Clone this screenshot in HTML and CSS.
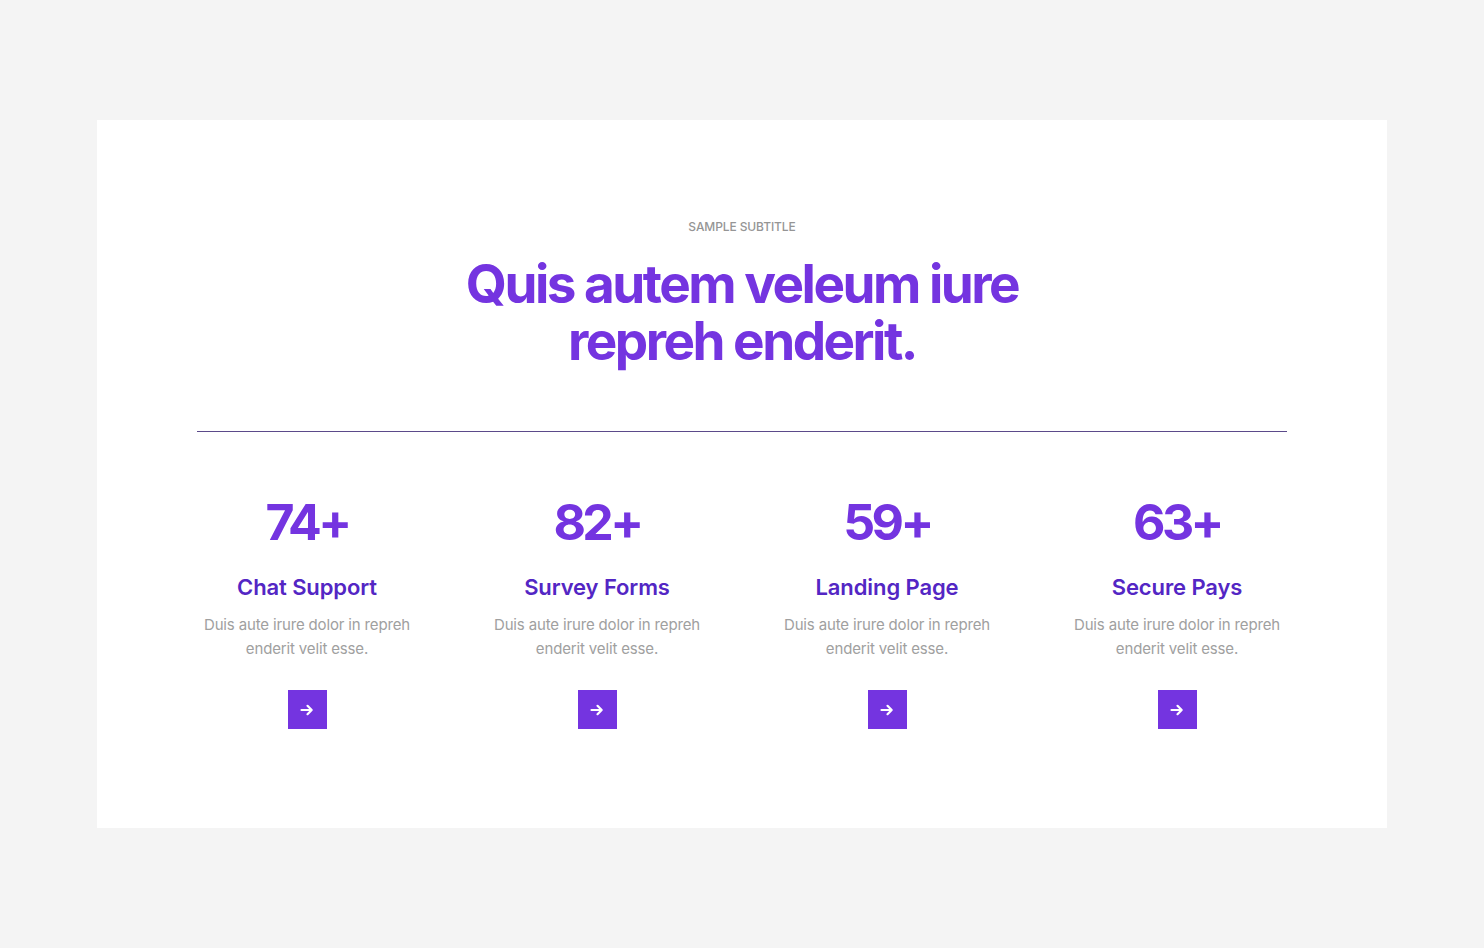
FILE: index.html
```html
<!DOCTYPE html>
<html lang="en">
<head>
<meta charset="utf-8">
<title>Stats</title>
<link rel="stylesheet" href="styles.css">
</head>
<body>
<main class="page">
  <section class="card">
    <header class="head">
      <p class="subtitle">SAMPLE SUBTITLE</p>
      <h1 class="title"><span class="line">Quis autem veleum iure</span><span class="line">repreh enderit.</span></h1>
    </header>
    <hr class="divider">
    <div class="stats">
      <div class="stat">
        <div class="num">74+</div>
        <h3 class="name">Chat Support</h3>
        <p class="desc">Duis aute irure dolor in repreh<br>enderit velit esse.</p>
        <a class="btn" href="#"><svg width="16" height="16" viewBox="0 0 16 16"><path d="M2.5 8h10M8.5 3.8L12.7 8 8.5 12.2" fill="none" stroke="#fff" stroke-width="2.2" stroke-linecap="round" stroke-linejoin="round"/></svg></a>
      </div>
      <div class="stat">
        <div class="num">82+</div>
        <h3 class="name">Survey Forms</h3>
        <p class="desc">Duis aute irure dolor in repreh<br>enderit velit esse.</p>
        <a class="btn" href="#"><svg width="16" height="16" viewBox="0 0 16 16"><path d="M2.5 8h10M8.5 3.8L12.7 8 8.5 12.2" fill="none" stroke="#fff" stroke-width="2.2" stroke-linecap="round" stroke-linejoin="round"/></svg></a>
      </div>
      <div class="stat">
        <div class="num">59+</div>
        <h3 class="name">Landing Page</h3>
        <p class="desc">Duis aute irure dolor in repreh<br>enderit velit esse.</p>
        <a class="btn" href="#"><svg width="16" height="16" viewBox="0 0 16 16"><path d="M2.5 8h10M8.5 3.8L12.7 8 8.5 12.2" fill="none" stroke="#fff" stroke-width="2.2" stroke-linecap="round" stroke-linejoin="round"/></svg></a>
      </div>
      <div class="stat">
        <div class="num">63+</div>
        <h3 class="name">Secure Pays</h3>
        <p class="desc">Duis aute irure dolor in repreh<br>enderit velit esse.</p>
        <a class="btn" href="#"><svg width="16" height="16" viewBox="0 0 16 16"><path d="M2.5 8h10M8.5 3.8L12.7 8 8.5 12.2" fill="none" stroke="#fff" stroke-width="2.2" stroke-linecap="round" stroke-linejoin="round"/></svg></a>
      </div>
    </div>
  </section>
</main>
</body>
</html>
```
FILE: styles.css
```css
* { box-sizing: border-box; }
html, body { margin: 0; padding: 0; }
body {
  background: #f4f4f4;
  font-family: Inter, "Noto Sans", sans-serif;
  width: 1484px;
  height: 948px;
}
.page {
  padding: 120px 97px 0;
}
.card {
  background: #fff;
  height: 708px;
  padding-top: 100px;
  display: flex;
  flex-direction: column;
  align-items: center;
}
.head { text-align: center; }
.subtitle {
  margin: 0;
  font-size: 12px;
  font-weight: 500;
  color: #959595;
  line-height: 14px;
  letter-spacing: -0.1px;
}
.title {
  margin: 22px 0 0;
  font-size: 53px;
  font-weight: 700;
  line-height: 57px;
  letter-spacing: -2.5px;
  color: #7434e0;
  display: flex;
  flex-direction: column;
  align-items: center;
}
.line {
  display: block;
  height: 57px;
}
.divider {
  width: 1090px;
  margin: 61px 0 0;
  border: 0;
  border-top: 1px solid #5b4a8a;
  height: 0;
}
.stats {
  display: flex;
  width: 1160px;
  margin-top: 62px;
}
.stat {
  flex: 1 1 0;
  display: flex;
  flex-direction: column;
  align-items: center;
  text-align: center;
}
.num {
  font-size: 50px;
  font-weight: 700;
  line-height: 56px;
  letter-spacing: -3.6px;
  color: #7434e0;
}
.name {
  margin: 24px 0 0;
  font-size: 22px;
  font-weight: 600;
  line-height: 26px;
  letter-spacing: -0.1px;
  color: #5326c4;
}
.desc {
  margin: 13px 0 0;
  font-size: 15px;
  line-height: 24px;
  color: #a0a0a0;
  letter-spacing: -0.15px;
}
.btn {
  margin-top: 29px;
  width: 39px;
  height: 39px;
  background: #7434e0;
  display: flex;
  align-items: center;
  justify-content: center;
}
```
